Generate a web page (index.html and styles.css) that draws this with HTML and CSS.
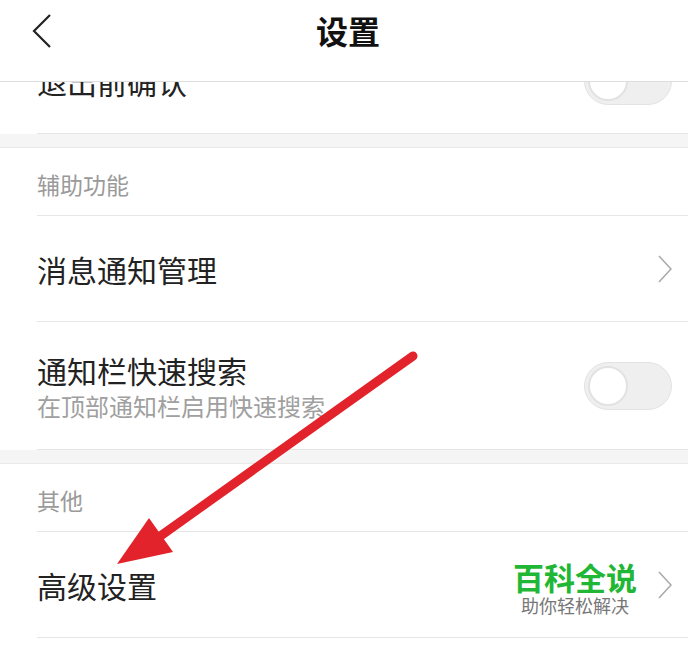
FILE: index.html
```html
<!DOCTYPE html>
<html lang="zh-CN">
<head>
    <meta charset="UTF-8">
    <title>设置</title>
    <link rel="stylesheet" href="styles.css">
</head>
<body>
    <div class="screen">
        <header class="topbar">
            <svg class="back" width="20" height="34" viewBox="0 0 20 34">
                <polyline points="18,1 2,17 18,33" fill="none" stroke="#222" stroke-width="2.2"/>
            </svg>
            <h1>设置</h1>
        </header>

        <div class="content">
            <section class="group">
                <div class="row">
                    <div class="label">退出前确认</div>
                    <div class="switch"><span class="knob"></span></div>
                </div>
            </section>

            <section class="group">
                <div class="group-title">辅助功能</div>
                <div class="row">
                    <div class="label">消息通知管理</div>
                    <svg class="chevron" width="14" height="28" viewBox="0 0 14 28">
                        <polyline points="1,1 13,14 1,27" fill="none" stroke="#aaa" stroke-width="1.6"/>
                    </svg>
                </div>
                <div class="row two">
                    <div>
                        <div class="label">通知栏快速搜索</div>
                        <div class="sub">在顶部通知栏启用快速搜索</div>
                    </div>
                    <div class="switch"><span class="knob"></span></div>
                </div>
            </section>

            <section class="group last">
                <div class="group-title">其他</div>
                <div class="row">
                    <div class="label">高级设置</div>
                    <svg class="chevron" width="14" height="28" viewBox="0 0 14 28">
                        <polyline points="1,1 13,14 1,27" fill="none" stroke="#aaa" stroke-width="1.6"/>
                    </svg>
                </div>
            </section>
        </div>

        <!-- 标注箭头 -->
        <svg class="arrow" width="688" height="650" viewBox="0 0 688 650">
            <line x1="413" y1="356" x2="152" y2="542" stroke="#e3232b" stroke-width="9" stroke-linecap="round"/>
            <polygon points="117,564 149,518 173,552" fill="#e3232b"/>
        </svg>

        <div class="watermark">
            <div class="wm-title">百科全说</div>
            <div class="wm-sub">助你轻松解决</div>
        </div>
    </div>
</body>
</html>
```

FILE: styles.css
```css
body {
    margin: 0;
    font-family: "Noto Sans CJK SC", "Noto Sans", sans-serif;
    color: #222;
    background: #fff;
}

.screen {
    position: relative;
    width: 688px;
    height: 650px;
    overflow: hidden;
    background: #fff;
}

.topbar {
    position: absolute;
    top: 0;
    left: 0;
    right: 0;
    height: 82px;
    box-sizing: border-box;
    border-bottom: 1px solid #dedede;
    background: #fff;
    display: flex;
    align-items: center;
    justify-content: center;
    z-index: 2;
}

.topbar h1 {
    margin: 0;
    font-size: 32px;
    font-weight: bold;
    color: #111;
    padding-left: 8px;
    margin-top: -22px;
}

.back {
    position: absolute;
    left: 32px;
    top: 14px;
}

.content {
    padding-top: 28px;
    background: #f5f5f5;
}

.group {
    background: #fff;
}

.group + .group {
    margin-top: 13px;
    border-top: 1px solid #e9e9e9;
}

.group.last {
    padding-bottom: 40px;
}

.group-title {
    height: 68px;
    box-sizing: border-box;
    margin-left: 37px;
    padding-top: 4px;
    border-bottom: 1px solid #e6e6e6;
    display: flex;
    align-items: center;
    font-size: 23px;
    color: #9a9a9a;
}

.row {
    height: 106px;
    box-sizing: border-box;
    margin-left: 37px;
    padding-right: 16px;
    border-bottom: 1px solid #e6e6e6;
    display: flex;
    align-items: center;
    justify-content: space-between;
}

.row.two {
    height: 128px;
}

.label {
    font-size: 30px;
    line-height: 40px;
    color: #222;
}

.sub {
    font-size: 24px;
    line-height: 32px;
    color: #a0a0a0;
}

.switch {
    width: 88px;
    height: 48px;
    box-sizing: border-box;
    border: 1px solid #e3e3e3;
    border-radius: 24px;
    background: #efefef;
    display: flex;
    align-items: center;
    padding-left: 3px;
}

.knob {
    width: 40px;
    height: 40px;
    box-sizing: border-box;
    border-radius: 50%;
    border: 2px solid #e2e2e2;
    background: #fff;
}

.arrow {
    position: absolute;
    top: 0;
    left: 0;
    z-index: 3;
}

.watermark {
    position: absolute;
    left: 505px;
    top: 560px;
    width: 140px;
    text-align: center;
    z-index: 3;
}

.wm-title {
    font-size: 31px;
    line-height: 34px;
    font-weight: bold;
    color: #1fb735;
}

.wm-sub {
    font-size: 18px;
    line-height: 22px;
    color: #777;
}
```
